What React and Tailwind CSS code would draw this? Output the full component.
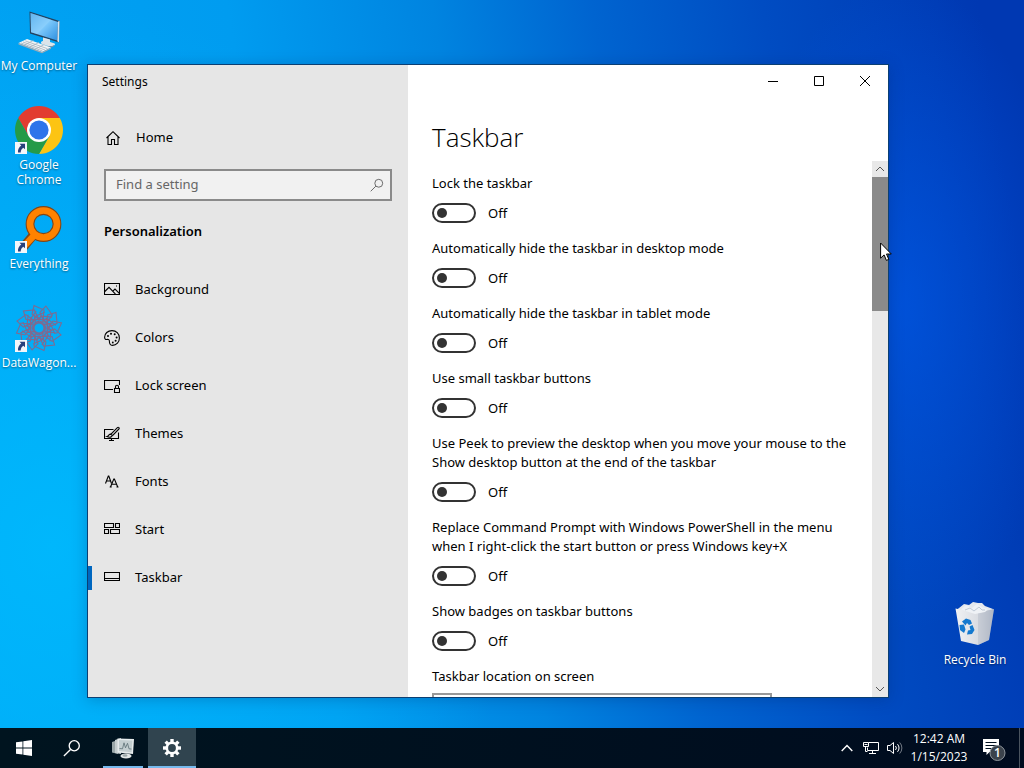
import React from "react";

const NAV = [
  { label: "Background", icon: "background" },
  { label: "Colors", icon: "colors" },
  { label: "Lock screen", icon: "lock" },
  { label: "Themes", icon: "themes" },
  { label: "Fonts", icon: "fonts" },
  { label: "Start", icon: "start" },
  { label: "Taskbar", icon: "taskbar", selected: true },
];

const OPTIONS = [
  "Lock the taskbar",
  "Automatically hide the taskbar in desktop mode",
  "Automatically hide the taskbar in tablet mode",
  "Use small taskbar buttons",
  "Use Peek to preview the desktop when you move your mouse to the Show desktop button at the end of the taskbar",
  "Replace Command Prompt with Windows PowerShell in the menu when I right-click the start button or press Windows key+X",
  "Show badges on taskbar buttons",
];

const SHAPES = {
  home: <path d="M1.5 8 8 1.7 14.5 8M3 6.8V14.5H6.5V9.5H9.5V14.5H13V6.8" />,
  background: (
    <>
      <path d="M.5 1.500h15v11H.5z" />
      <path d="M.8 9.500 5 5.300l6.500 6.900M8.800 9.200l2.200-2.200 4.300 4.300" />
      <path d="M12 4h1" />
    </>
  ),
  colors: (
    <>
      <path d="M8 .6C3.800.6.6 3.500.6 7.300c0 1.700 1 2.500 2.200 2.200 1.500-.4 2.700.2 2.600 1.800-.1 2.500 1 4.100 3 4.100 4.200 0 7-3.300 7-7.400C15.400 3.700 12.200.6 8 .6Z" />
      <g fill="currentColor" stroke="none">
        <circle cx="4" cy="6" r="1" />
        <circle cx="7" cy="3.800" r="1" />
        <circle cx="10.700" cy="4.300" r="1" />
        <circle cx="12.600" cy="7.400" r="1" />
        <circle cx="11.600" cy="10.800" r="1" />
        <circle cx="8.800" cy="12.500" r=".9" />
      </g>
    </>
  ),
  lock: (
    <>
      <path d="M9 11.500H.5v-9h15v4.500" />
      <path d="M10.500 10.500h5v4h-5zM11.500 10.500V8.700a1.500 1.500 0 0 1 3 0v1.800" />
    </>
  ),
  themes: (
    <>
      <path d="M9.500 3.500h-9v9h14V6.500M7.500 12.500v2M5 14.500h5" />
      <path d="M7 8.200 13.400 1.600a1 1 0 0 1 1.500 1.400L8.500 9.700M3 10.600c1.500-.1 1.600-2.400 3.300-2.500 1.600 0 2.300 1.500 1.300 2.400-1.200 1-3 .9-4.600.1Z" />
    </>
  ),
  fonts: (
    <>
      <path d="M1.500 9.500 4.300 2h.5L7.500 9.500M2.500 7h4" />
      <path d="M6.500 13 9.800 5h.6L13.700 13M7.700 10.200h4.800M5.700 13h2M12.500 13h2" />
    </>
  ),
  start: <path d="M.5 1.500h9v4h-9zM11.500 1.500h4v4h-4zM.5 7.500h4v4h-4zM6.500 7.500h9v4h-9z" />,
  taskbar: <path d="M.5 2.500h15v8H.5zM.5 8.500h15" />,
};

function LineIcon({ name }) {
  return (
    <svg viewBox="0 0 16 16" className="size-4 shrink-0" fill="none" stroke="currentColor" strokeWidth="1.100" aria-hidden="true">
      {SHAPES[name]}
    </svg>
  );
}

function Magnifier({ className, width }) {
  return (
    <svg viewBox="0 0 16 16" className={className} fill="none" stroke="currentColor" strokeWidth={width} aria-hidden="true">
      <circle cx="10" cy="6" r="4.500" />
      <path d="M6.700 9.300.8 15.200" />
    </svg>
  );
}

function ShortcutArrow() {
  return (
    <svg viewBox="0 0 12 12" className="absolute bottom-0 left-0 size-3" aria-hidden="true">
      <path fill="#f4f6fa" d="M0 0h12v12H0z" />
      <path fill="#28407c" d="M4.500 1.800H10v5.500L8.300 5.700C6.500 7 5.800 8.400 5.700 10.500H3C2.700 7.500 4 5.200 6.300 3.600Z" />
    </svg>
  );
}

function ComputerArt() {
  return (
    <svg viewBox="0 0 48 48" className="size-12" aria-hidden="true">
      <defs>
        <linearGradient id="screen" x1="0" y1="0" x2="1" y2="1">
          <stop offset="0" stopColor="#3f9fe6" />
          <stop offset=".5" stopColor="#7cc8fb" />
          <stop offset="1" stopColor="#2c8fe0" />
        </linearGradient>
      </defs>
      <path d="M14.500 4.500 44.500 14 44 35.500 15 26.500Z" fill="#23425f" />
      <path d="M15.500 6 43 15 42.300 33.500 16 25.200Z" fill="url(#screen)" />
      <path d="M15.500 6 36 12.700 22 27 16 25.200Z" fill="#a5dcff" opacity=".35" />
      <path d="M44.500 14 44 35.500 42.300 34.300 43 14.500Z" fill="#d3e2ec" />
      <path d="M28 30.500 35 32.500V35l4 1.200c2 .8 1 2.500-2 2.800-5 .5-10-1-11-3-.3-1 .5-1.800 2-2.100Z" fill="#dbe4ea" />
      <path d="M26 37c2 2 9 3.500 13 .9v1c-3 2.800-11 1.500-13-.7Z" fill="#8496a5" />
      <path d="M3.500 36 12 32l24 8.500-9 4.500Z" fill="#f1f4f6" />
      <path d="M3.500 36 27 45 36 40.500v1.200L27 46.200 3.500 37.500Z" fill="#9eabb5" />
      <path d="M6 36 27.500 44M8 35 30 43M10.300 33.900 32.500 41.700M9.500 38l9-4.600M15 40l9-4.600M20.500 42l9-4.600" stroke="#a7b3bc" strokeWidth=".8" />
    </svg>
  );
}

function ChromeArt() {
  return (
    <svg viewBox="0 0 48 48" className="size-12" aria-hidden="true">
      <path d="M3.220 12a24 24 0 0 1 41.560 0H24L13.600 30Z" fill="#e23c30" />
      <path d="M44.780 12A24 24 0 0 1 24 48L34.400 30 24 12Z" fill="#fcc413" />
      <path d="M24 48A24 24 0 0 1 3.220 12L13.600 30C17 34.500 26 37 34.400 30Z" fill="#259a48" />
      <circle cx="24" cy="24" r="12" fill="#fff" />
      <circle cx="24" cy="24" r="9.600" fill="#2d74ea" />
    </svg>
  );
}

function EverythingArt() {
  return (
    <svg viewBox="0 0 48 48" className="size-12" fill="none" aria-hidden="true">
      <path d="M18.500 30 8 42.500" stroke="#804618" strokeWidth="9" />
      <circle cx="28.500" cy="19" r="13.500" stroke="#804618" strokeWidth="8.800" />
      <path d="M20 29.500 8.500 41.800" stroke="#ff8200" strokeWidth="6.500" />
      <circle cx="28.500" cy="19" r="13.500" stroke="#ff8200" strokeWidth="6.600" />
    </svg>
  );
}

function KnotArt() {
  return (
    <svg viewBox="0 0 48 48" className="size-12" fill="none" stroke="#7f6a90" strokeWidth="1.100" aria-hidden="true">
      {[0, 30, 60, 90, 120, 150, 180, 210, 240, 270, 300, 330].map((a) => (
        <path key={a} transform={`rotate(${a} 24 24)`} d="M24 15 17 10 19 1.500 29 6 28 16M21 12l9-4M26 19l6-5" />
      ))}
      {[0, 30, 60].map((a) => (
        <path key={a} transform={`rotate(${a} 24 24)`} d="M15.500 15.500h17v17h-17zM19 19h10v10H19z" />
      ))}
    </svg>
  );
}

function BinArt() {
  return (
    <svg viewBox="0 0 48 48" className="size-12" aria-hidden="true">
      <defs>
        <linearGradient id="bin" x1="0" x2="1">
          <stop offset="0" stopColor="#f1f2f4" />
          <stop offset=".6" stopColor="#d9dce2" />
          <stop offset="1" stopColor="#b3bac8" />
        </linearGradient>
      </defs>
      <path d="M5.500 9 13 3l5 1 4-3 5 1 4 0 3 3 8 3-3 7-26 1Z" fill="#e4e8ee" />
      <path d="M4.500 7.500 25 12 43 8 38 39 27 44 10 40Z" fill="url(#bin)" />
      <path d="M27 12 43 8 38 39 27 44Z" fill="#a9b1bf" opacity=".35" />
      <path d="M10 8.500 15 4l6 3 5-4 5 3 6 2-3 3-10 2Z" fill="#eff2f6" />
      <path d="m14 9 5-2 4 3 5-4 3 3 3 0" stroke="#b4bfcd" strokeWidth=".8" fill="none" />
      <g fill="#1479cf">
        <path d="m11 20.500 4-3 4.500 1.500 1.500 3.500-3 1.500-2-2-1.500 2.500Z" />
        <path d="m8.500 24 4.500-.5 1.500 5-1.500 3.500-4-3Z" />
        <path d="m21.500 24 2 5-2.500 4-5 .5 1-4 2.500-.5-1-3.500Z" />
      </g>
    </svg>
  );
}

function DesktopIcon({ label, art, shortcut }) {
  return (
    <button type="button" className="flex h-[99px] w-[78px] flex-col items-center gap-[3px]">
      <span className="relative block">
        {art}
        {shortcut && <ShortcutArrow />}
      </span>
      <span className="text-center text-xs leading-[15px] text-white [text-shadow:0_1px_2px_rgba(0,0,0,0.45)]">{label}</span>
    </button>
  );
}

function CaptionButton({ label, d }) {
  return (
    <button type="button" aria-label={label} className="flex h-8 w-[46px] items-center justify-center">
      <svg viewBox="0 0 12 12" className="size-3" fill="none" stroke="#000" strokeWidth="1" aria-hidden="true">
        <path d={d} />
      </svg>
    </button>
  );
}

function Toggle({ id, label }) {
  return (
    <div className="flex flex-col gap-2.5">
      <label htmlFor={id} className="leading-[19px]">{label}</label>
      <div className="flex h-5 items-center gap-3">
        <input
          id={id}
          type="checkbox"
          role="switch"
          className="flex h-5 w-11 appearance-none items-center rounded-full border-2 border-[#333] px-[3px] before:block before:size-2.5 before:rounded-full before:bg-[#333] checked:justify-end"
        />
        <span className="leading-5">Off</span>
      </div>
    </div>
  );
}

function Sidebar() {
  return (
    <aside className="flex w-80 shrink-0 flex-col bg-[#e6e6e6]">
      <div className="flex h-[33px] items-center pl-3.5 text-xs">Settings</div>
      <a href="#home" className="mt-4 flex h-12 items-center gap-[15px] pl-[17px]">
        <LineIcon name="home" />
        Home
      </a>
      <label className="mx-4 mt-[7px] flex h-8 items-center border-2 border-[#8a8a8a] bg-[#f1f1f1] pr-1.5 pl-2.5">
        <input type="search" aria-label="Find a setting" placeholder="Find a setting" className="min-w-0 flex-1 bg-transparent outline-none placeholder:text-[#666]" />
        <Magnifier className="size-3.5 text-[#666]" width="1.100" />
      </label>
      <h2 className="mt-5 pl-4 leading-5 font-semibold">Personalization</h2>
      <nav className="mt-[25px] flex flex-col">
        {NAV.map((n) => (
          <a
            key={n.label}
            href={"#" + n.icon}
            aria-current={n.selected ? "page" : undefined}
            className="flex h-12 items-center"
          >
            <span className={n.selected ? "h-6 w-1 bg-[#0067c0]" : "h-6 w-1"} />
            <span className="flex items-center gap-[15px] pl-3">
              <LineIcon name={n.icon} />
              {n.label}
            </span>
          </a>
        ))}
      </nav>
    </aside>
  );
}

function ScrollBar() {
  return (
    <div className="flex w-4 shrink-0 flex-col bg-[#e8e8e8] text-[#555]">
      <button type="button" aria-label="Scroll up" className="flex h-4 items-center justify-center">
        <svg viewBox="0 0 10 6" className="h-1.5 w-2.5" fill="none" stroke="currentColor" aria-hidden="true">
          <path d="M1 5 5 1l4 4" />
        </svg>
      </button>
      <div className="min-h-0 flex-1">
        <div className="h-[134px] bg-[#8a8a8a]" />
      </div>
      <button type="button" aria-label="Scroll down" className="flex h-4 items-center justify-center">
        <svg viewBox="0 0 10 6" className="h-1.5 w-2.5" fill="none" stroke="currentColor" aria-hidden="true">
          <path d="M1 1 5 5l4-4" />
        </svg>
      </button>
    </div>
  );
}

function SettingsWindow() {
  return (
    <section
      aria-label="Settings"
      className="absolute top-16 right-[135px] bottom-[30px] left-[87px] flex overflow-hidden border border-[#0b3f73] bg-white font-['Noto_Sans','Open_Sans',sans-serif] text-[13px] text-black shadow-[0_2px_14px_rgba(0,30,90,0.25)]"
    >
      <Sidebar />
      <main className="flex min-w-0 flex-1 flex-col">
        <div className="flex justify-end">
          <CaptionButton label="Minimize" d="M1 6.500h10" />
          <CaptionButton label="Maximize" d="M1.500 1.500h9v9h-9z" />
          <CaptionButton label="Close" d="M1 1l10 10M11 1 1 11" />
        </div>
        <h1 className="mt-[22px] mb-1.5 pl-6 font-['Open_Sans','Noto_Sans',sans-serif] text-[26px] leading-9 font-light">Taskbar</h1>
        <div className="flex min-h-0 flex-1">
          <div className="flex min-w-0 flex-1 flex-col gap-4 overflow-hidden pt-[13px] pr-4 pl-6">
            {OPTIONS.map((o, i) => (
              <Toggle key={o} id={"opt" + i} label={o} />
            ))}
            <div className="flex flex-col gap-[7px]">
              <label htmlFor="location" className="leading-[19px]">Taskbar location on screen</label>
              <select id="location" className="h-8 w-[340px] shrink-0 appearance-none border-2 border-[#999] px-2">
                <option>Bottom</option>
              </select>
            </div>
          </div>
          <ScrollBar />
        </div>
      </main>
    </section>
  );
}

function Taskbar() {
  return (
    <footer className="flex h-10 shrink-0 items-stretch bg-linear-to-r from-[#00141f] to-[#000c1f] text-white">
      <button type="button" aria-label="Start" className="flex w-12 items-center justify-center">
        <svg viewBox="0 0 16 16" className="size-4" fill="currentColor" aria-hidden="true">
          <path d="M0 2.300 6.500 1.400v6.200H0zM7.300 1.300 16 0v7.600H7.300zM0 8.400h6.500v6.200L0 13.700zM7.300 8.400H16V16l-8.700-1.300z" />
        </svg>
      </button>
      <button type="button" aria-label="Search" className="flex w-12 items-center justify-center">
        <Magnifier className="size-[18px]" width="1.200" />
      </button>
      <button type="button" aria-label="Performance Monitor" className="ml-[3px] flex w-12 flex-col items-center justify-between">
        <svg viewBox="0 0 24 24" className="mt-2 size-6" aria-hidden="true">
          <path d="m1 6 6-2v14l-6-1.500Z" fill="#9ba7a9" />
          <path d="m4 4 6-2v16l-6-1Z" fill="#c5cdce" />
          <path d="M6.500 2.500 23 3 22 18 6.500 16.500Z" fill="#e6ebec" />
          <path d="M8 4 21.400 4.500l-.8 11.700L8 15Z" fill="#c3ced0" />
          <path d="m8.500 12.500 3 .3 1.500-6 1.500 5 2-4.500 1.500 5.500 2.500.3" fill="none" stroke="#5b6e74" strokeWidth=".8" />
          <ellipse cx="15" cy="20" rx="5.500" ry="2.600" fill="#e2e7e7" />
          <ellipse cx="14" cy="19.500" rx="2.500" ry="1.200" fill="#9ba7a9" />
        </svg>
        <span className="h-0.5 w-10 bg-[#76b9ed]" />
      </button>
      <button type="button" aria-label="Settings" className="ml-px flex w-12 flex-col items-stretch justify-between bg-[#30444f]">
        <svg viewBox="0 0 20 20" className="mt-2.5 size-5 self-center" fill="none" stroke="currentColor" aria-hidden="true">
          <circle cx="10" cy="10" r="5.200" strokeWidth="2.600" />
          {[0, 45, 90, 135, 180, 225, 270, 315].map((a) => (
            <path key={a} d="M10 4.500V1" strokeWidth="3.400" transform={`rotate(${a} 10 10)`} />
          ))}
        </svg>
        <span className="h-0.5 bg-[#76b9ed]" />
      </button>

      <div className="ml-auto flex items-center">
        <button type="button" aria-label="Show hidden icons" className="flex w-6 justify-center">
          <svg viewBox="0 0 12 8" className="h-2 w-3" fill="none" stroke="currentColor" strokeWidth="1.400" aria-hidden="true">
            <path d="M.7 7 6 1.500 11.300 7" />
          </svg>
        </button>
        <button type="button" aria-label="Network" className="flex w-6 justify-center">
          <svg viewBox="0 0 16 14" className="h-3.5 w-4" fill="none" stroke="currentColor" aria-hidden="true">
            <path d="M5.500 1.500h10v8H4.500V6.500M9.500 9.500v3M6 12.500h7M.5 1.500h5v4h-5zM2.500 5.500v5h2" />
            <path d="M1.500 3.500h3" />
          </svg>
        </button>
        <button type="button" aria-label="Volume" className="flex w-6 justify-center">
          <svg viewBox="0 0 16 14" className="h-3.5 w-4" fill="none" stroke="currentColor" aria-hidden="true">
            <path d="M.5 4.500h2.500L6.500 1.500v11L3 9.500H.5z" />
            <path d="M8.500 5a3 3 0 0 1 0 4M10.500 3.200a5.500 5.500 0 0 1 0 7.600" />
            <path d="M12.700 1.500a8 8 0 0 1 0 11" opacity=".45" />
          </svg>
        </button>
        <button type="button" className="w-16 text-center text-xs leading-[18px]">
          <span className="block">12:42 AM</span>
          <span className="block">1/15/2023</span>
        </button>
        <button type="button" aria-label="Notifications" className="flex w-12 pl-[9px]">
          <svg viewBox="0 0 26 26" className="size-6.5" aria-hidden="true">
            <path d="M3 4h16v13h-9.500L6.500 20v-3H3z" fill="#fff" />
            <path d="M5.500 7.500h11M5.500 10.500h11M5.500 13.500h7" stroke="#001020" />
            <circle cx="17.500" cy="18" r="7.500" fill="#3b434c" stroke="#8f969c" />
            <text x="17.500" y="22.300" fill="#fff" fontSize="12" fontWeight="600" textAnchor="middle">1</text>
          </svg>
        </button>
        <button type="button" aria-label="Show desktop" className="h-10 w-[5px] border-l border-[#4a545f]" />
      </div>
    </footer>
  );
}

export default function App() {
  return (
    <div className="flex h-screen flex-col overflow-hidden bg-[#0060d8] font-['Open_Sans','Noto_Sans',sans-serif]">
      <div className="relative min-h-0 flex-1 bg-[radial-gradient(ellipse_45%_75%_at_5%_75%,rgba(0,190,255,0.75),transparent),radial-gradient(ellipse_16%_45%_at_88%_42%,rgba(0,90,235,0.6),transparent),linear-gradient(81deg,#00a4f4_0%,#009cf0_30%,#0084e0_48%,#0064d0_62%,#004cc2_77%,#0038b2_96%)]">
        <div className="flex flex-col pt-[7px]">
          <DesktopIcon label="My Computer" art={<ComputerArt />} />
          <DesktopIcon label="Google Chrome" art={<ChromeArt />} shortcut />
          <DesktopIcon label="Everything" art={<EverythingArt />} shortcut />
          <DesktopIcon label="DataWagon..." art={<KnotArt />} shortcut />
        </div>
        <div className="absolute right-2.5 bottom-7">
          <DesktopIcon label="Recycle Bin" art={<BinArt />} />
        </div>
        <SettingsWindow />
        <svg viewBox="0 0 12 20" className="absolute top-[242px] right-[132px] h-5 w-3" aria-hidden="true">
          <path d="M.6 1v15.200l3.500-3.300 2.300 5.500 2.400-1-2.300-5.400h4.800z" fill="#fff" stroke="#000" />
        </svg>
      </div>
      <Taskbar />
    </div>
  );
}
